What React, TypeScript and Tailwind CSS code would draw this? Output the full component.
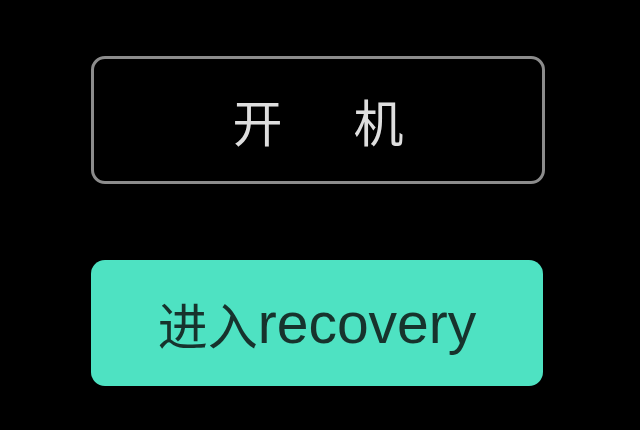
import React from "react";

export default function App() {
  return (
    <div className="w-[640px] h-[430px] bg-black flex flex-col pt-[56px] pl-[91px] gap-[76px] font-['Noto_Sans_CJK_SC','Liberation_Sans',sans-serif]">
      {/* power on */}
      <button
        type="button"
        className="w-[454px] h-[128px] rounded-[14px] border-[3px] border-[#8c8c8c] bg-black flex items-center justify-center gap-[71px] text-[50px] text-[#dedede] leading-none"
      >
        <span>开</span>
        <span>机</span>
      </button>

      {/* recovery mode */}
      <button
        type="button"
        className="w-[452px] h-[126px] rounded-[14px] bg-[#4ee2c2] flex items-center justify-center text-[#17332d] leading-none"
      >
        <span className="text-[50px]">进入</span>
        <span className="text-[57px] font-['Liberation_Sans',sans-serif]">recovery</span>
      </button>
    </div>
  );
}
